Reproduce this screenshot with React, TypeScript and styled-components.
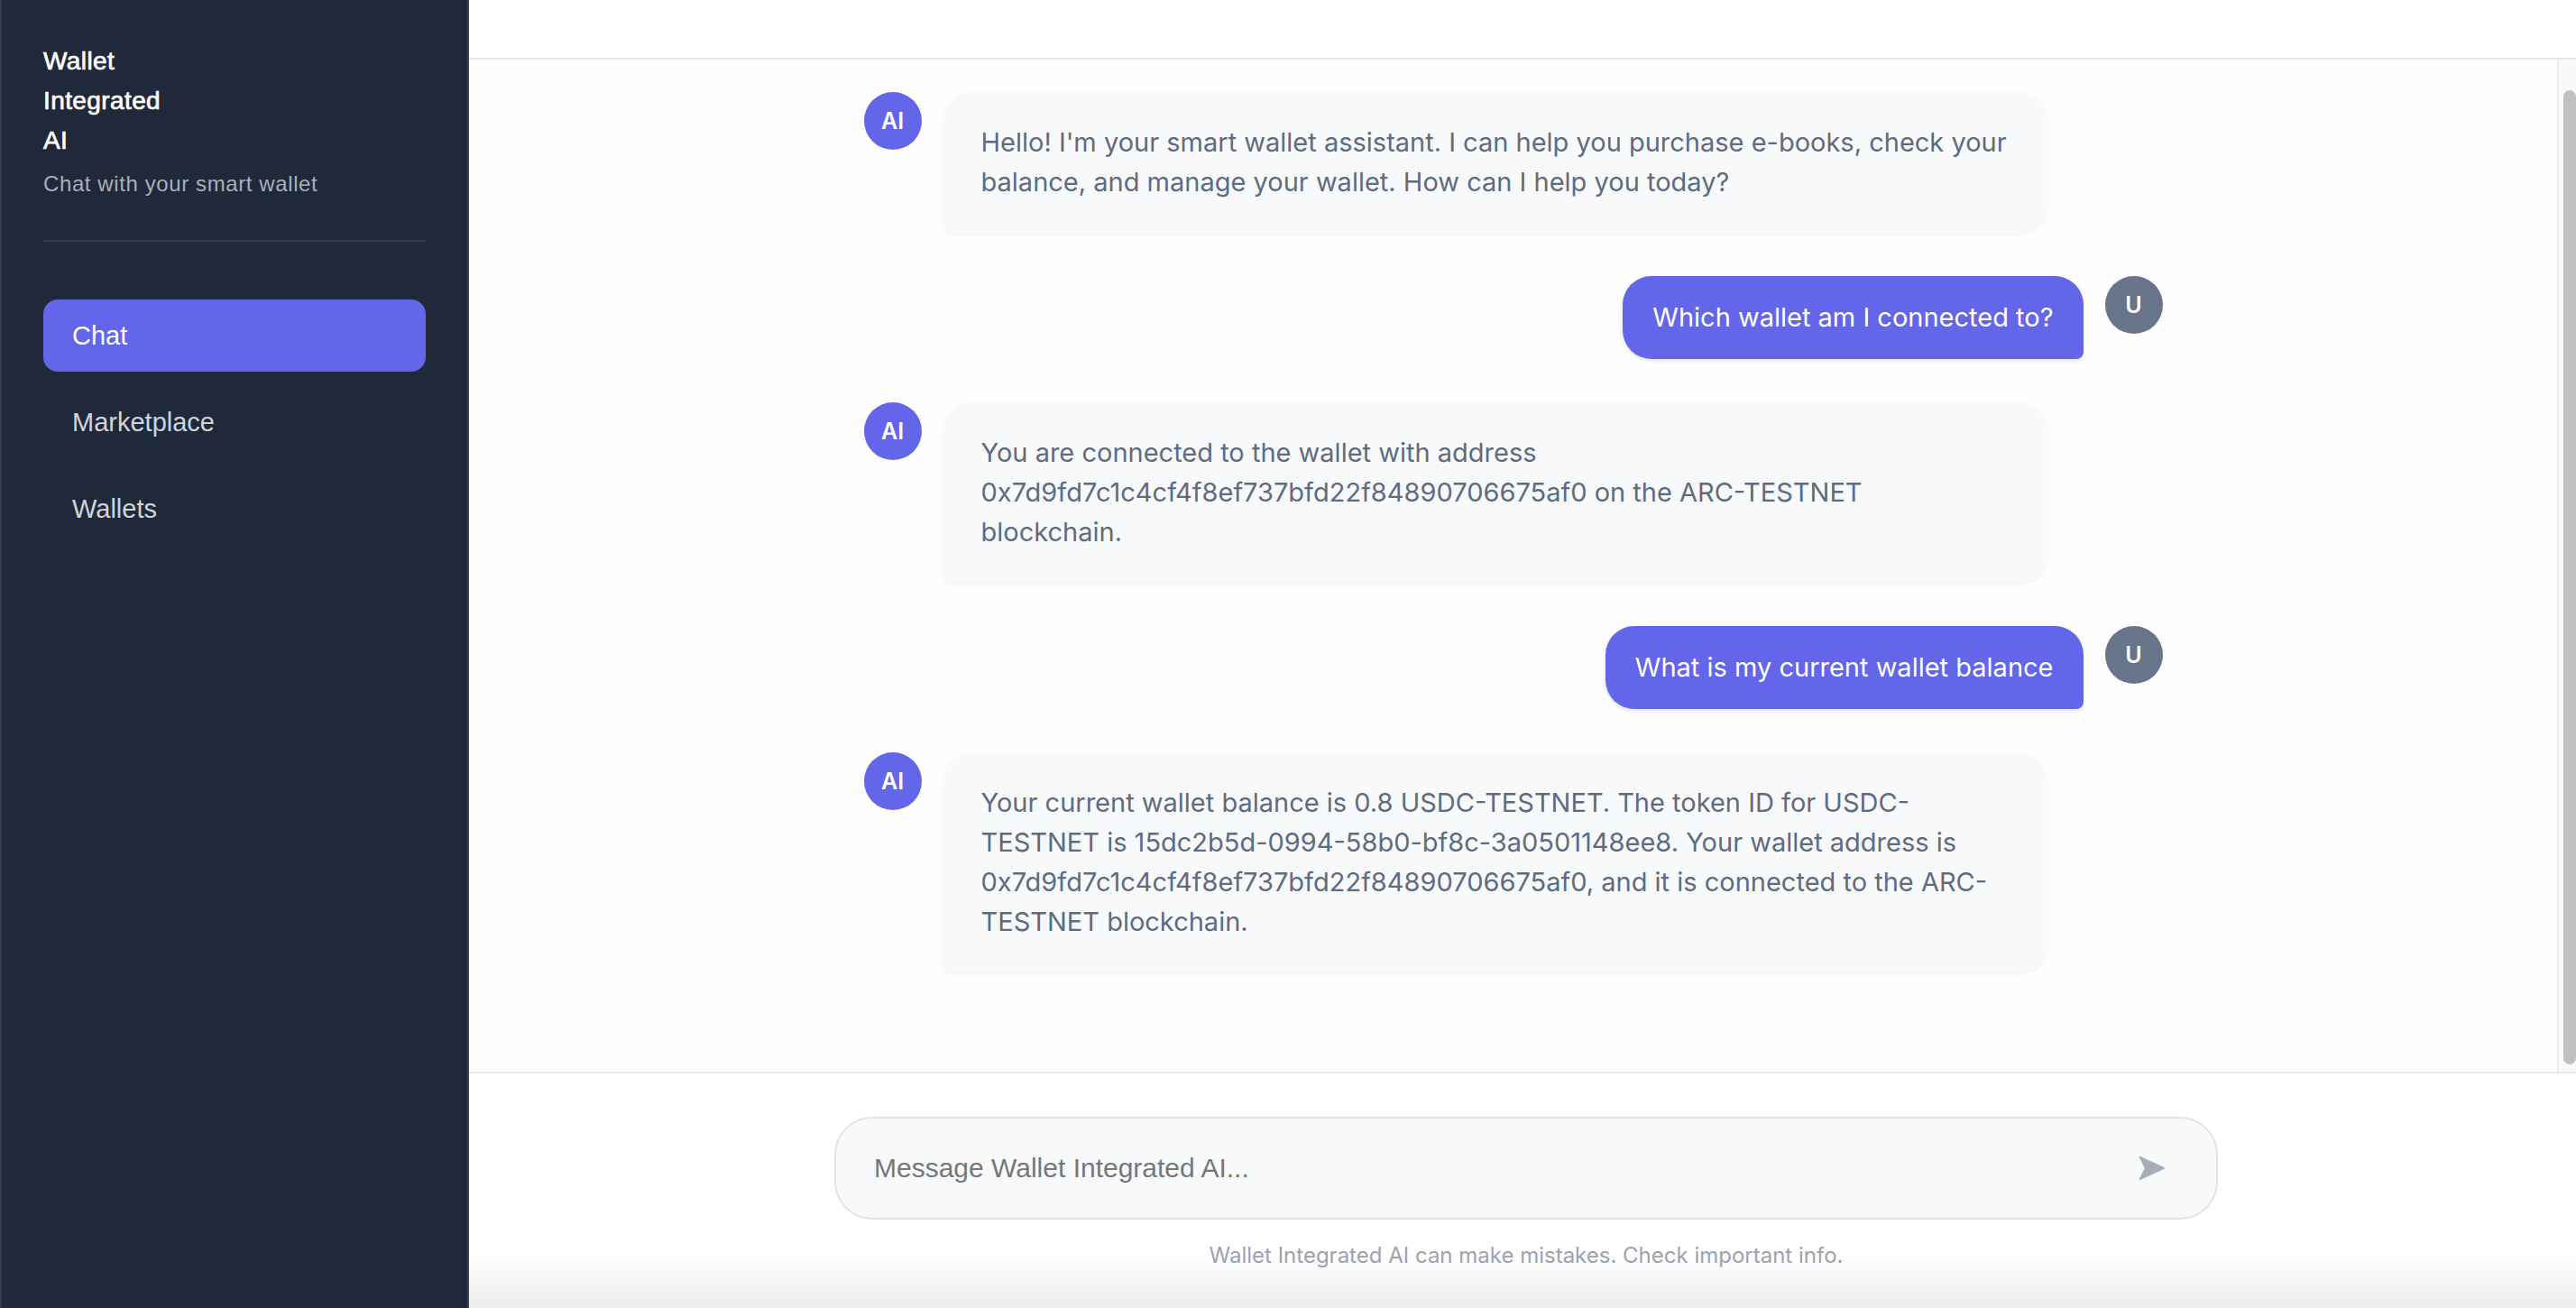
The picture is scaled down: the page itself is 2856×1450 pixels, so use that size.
import React, { useLayoutEffect, useRef } from 'react';
import styled, { createGlobalStyle } from 'styled-components';

const GlobalStyle = createGlobalStyle`
  html, body, #root {
    margin: 0;
    padding: 0;
    height: 100%;
  }
  body {
    overflow: hidden;
    background: #ffffff;
    font-family: 'Liberation Sans', Arial, sans-serif;
  }
  * {
    box-sizing: border-box;
  }
`;

type Message = {
  id: number;
  role: 'ai' | 'user';
  text: string;
};

const messages: Message[] = [
  {
    id: 1,
    role: 'ai',
    text: "Hello! I'm your smart wallet assistant. I can help you purchase e-books, check your balance, and manage your wallet. How can I help you today?",
  },
  { id: 2, role: 'user', text: 'Which wallet am I connected to?' },
  {
    id: 3,
    role: 'ai',
    text: 'You are connected to the wallet with address 0x7d9fd7c1c4cf4f8ef737bfd22f84890706675af0 on the ARC-TESTNET blockchain.',
  },
  { id: 4, role: 'user', text: 'What is my current wallet balance' },
  {
    id: 5,
    role: 'ai',
    text: 'Your current wallet balance is 0.8 USDC-TESTNET. The token ID for USDC-TESTNET is 15dc2b5d-0994-58b0-bf8c-3a0501148ee8. Your wallet address is 0x7d9fd7c1c4cf4f8ef737bfd22f84890706675af0, and it is connected to the ARC-TESTNET blockchain.',
  },
];

const navItems = ['Chat', 'Marketplace', 'Wallets'];

const Layout = styled.div`
  display: flex;
  height: 100vh;
  width: 100%;
`;

// Sidebar
const Sidebar = styled.aside`
  width: 520px;
  flex-shrink: 0;
  background: #20293a;
  border-left: 2px solid #333c4d;
  border-right: 2px solid #394252;
  padding: 46px 46px 48px 46px;
  display: flex;
  flex-direction: column;
`;

const Brand = styled.div`
  padding-bottom: 44px;
  border-bottom: 2px solid #333d4f;
`;

const BrandTitle = styled.h1`
  width: min-content;
  margin: 0;
  color: #ffffff;
  font-size: 28px;
  line-height: 44px;
  font-weight: 400;
  letter-spacing: 0.4px;
  -webkit-text-stroke: 0.7px #ffffff;
`;

const BrandSubtitle = styled.p`
  margin: 8px 0 0 0;
  color: #a8afbb;
  font-size: 24px;
  line-height: 36px;
  letter-spacing: 0.6px;
`;

const Nav = styled.nav`
  margin-top: 64px;
  display: flex;
  flex-direction: column;
  gap: 16px;
`;

const NavItem = styled.button<{ $active?: boolean }>`
  height: 80px;
  display: flex;
  align-items: center;
  padding: 0 32px;
  border: none;
  border-radius: 16px;
  background: ${(p) => (p.$active ? '#6466e9' : 'transparent')};
  color: ${(p) => (p.$active ? '#ffffff' : '#d1d5db')};
  font-family: 'Liberation Sans', Arial, sans-serif;
  font-size: 29px;
  text-align: left;
  cursor: pointer;
`;

// Main chat area
const Main = styled.main`
  flex: 1;
  min-width: 0;
  display: flex;
  flex-direction: column;
  background: #ffffff;
`;

const TopBar = styled.header`
  height: 66px;
  flex-shrink: 0;
  border-bottom: 2px solid #e5e7eb;
`;

const MessagesArea = styled.div`
  flex: 1;
  min-height: 0;
  display: flex;
`;

const MessageScroller = styled.div`
  flex: 1;
  min-width: 0;
  overflow-y: auto;
  scrollbar-width: none;
  padding: 80px 0 110px 0;
  background: #fefefe;

  &::-webkit-scrollbar {
    display: none;
  }
`;

const ScrollRail = styled.div`
  width: 21px;
  flex-shrink: 0;
  display: flex;
  padding: 34px 0 8px 5px;
  background: #f9f9f9;
  border-left: 2px solid #ebebeb;
`;

const ScrollThumb = styled.div`
  flex: 1;
  background: #c1c1c1;
  border-radius: 7px;
`;

const MessageColumn = styled.div`
  max-width: 1440px;
  margin: 0 auto;
  display: flex;
  flex-direction: column;
  gap: 48px;
`;

const Row = styled.div<{ $user?: boolean }>`
  display: flex;
  flex-direction: ${(p) => (p.$user ? 'row-reverse' : 'row')};
  align-items: flex-start;
  gap: 24px;
`;

const Avatar = styled.div<{ $user?: boolean }>`
  width: 64px;
  height: 64px;
  border-radius: 50%;
  flex-shrink: 0;
  display: flex;
  align-items: center;
  justify-content: center;
  background: ${(p) => (p.$user ? '#67748a' : '#6466e9')};
  color: #ffffff;
  font-family: Inter, 'Liberation Sans', sans-serif;
  font-size: 25px;
  font-weight: 600;
`;

const Bubble = styled.div<{ $user?: boolean }>`
  max-width: 85%;
  padding: ${(p) => (p.$user ? '24px 33px' : '34px 44px 34px 42px')};
  border-radius: ${(p) => (p.$user ? '32px 32px 8px 32px' : '32px 32px 32px 8px')};
  background: ${(p) => (p.$user ? '#6466e9' : '#f8f9fb')};
  color: ${(p) => (p.$user ? '#ffffff' : '#5f6b80')};
  box-shadow: ${(p) =>
    p.$user ? '0 2px 4px rgba(99, 102, 241, 0.18)' : '0 2px 4px rgba(15, 23, 42, 0.05)'};
  font-family: Inter, 'Liberation Sans', sans-serif;
  font-size: 29px;
  line-height: 44px;
  overflow-wrap: break-word;
`;

// Composer
const Composer = styled.footer`
  flex-shrink: 0;
  border-top: 2px solid #e5e7eb;
  padding: 48px 0 40px 8px;
  background: linear-gradient(to bottom, #ffffff 0%, #ffffff 76%, #ededed 100%);
`;

const InputBox = styled.div`
  max-width: 1534px;
  margin: 0 auto;
  height: 114px;
  display: flex;
  align-items: center;
  padding: 0 48px 0 40px;
  border: 2px solid #e3e4e6;
  border-radius: 42px;
  background: #f8f9fa;
`;

const TextInput = styled.input`
  flex: 1;
  border: none;
  outline: none;
  background: transparent;
  font-family: 'Liberation Sans', Arial, sans-serif;
  font-size: 30px;
  color: #374151;

  &::placeholder {
    color: #777777;
  }
`;

const SendButton = styled.button`
  width: 48px;
  height: 48px;
  padding: 0;
  border: none;
  background: transparent;
  display: flex;
  align-items: center;
  justify-content: center;
  cursor: pointer;
`;

const Disclaimer = styled.p`
  margin: 22px 0 0 0;
  text-align: center;
  color: #9ca3af;
  font-family: Inter, 'Liberation Sans', sans-serif;
  font-size: 24px;
  line-height: 36px;
`;

function SendIcon() {
  return (
    <svg width="31" height="30" viewBox="0 0 30 30" fill="#a6adb8">
      <path
        d="M2.4 2.2 L28.6 14.2 Q30 15 28.6 15.8 L2.4 27.8 Q0.8 28.4 1.6 26.8 L7.6 15 L1.6 3.2 Q0.8 1.6 2.4 2.2 Z"
        stroke="#a6adb8"
        strokeWidth="0.6"
        strokeLinejoin="round"
      />
    </svg>
  );
}

export default function App() {
  const scrollRef = useRef<HTMLDivElement>(null);

  // keep the conversation pinned to the latest message
  useLayoutEffect(() => {
    const el = scrollRef.current;
    if (el) el.scrollTop = el.scrollHeight;
  }, []);

  return (
    <>
      <GlobalStyle />
      <Layout>
        <Sidebar>
          <Brand>
            <BrandTitle>Wallet Integrated AI</BrandTitle>
            <BrandSubtitle>Chat with your smart wallet</BrandSubtitle>
          </Brand>
          <Nav>
            {navItems.map((item) => (
              <NavItem key={item} $active={item === 'Chat'}>
                {item}
              </NavItem>
            ))}
          </Nav>
        </Sidebar>

        <Main>
          <TopBar />
          <MessagesArea>
            <MessageScroller ref={scrollRef}>
              <MessageColumn>
                {messages.map((m) => (
                  <Row key={m.id} $user={m.role === 'user'}>
                    <Avatar $user={m.role === 'user'}>{m.role === 'user' ? 'U' : 'AI'}</Avatar>
                    <Bubble $user={m.role === 'user'}>{m.text}</Bubble>
                  </Row>
                ))}
              </MessageColumn>
            </MessageScroller>
            <ScrollRail>
              <ScrollThumb />
            </ScrollRail>
          </MessagesArea>
          <Composer>
            <InputBox>
              <TextInput placeholder="Message Wallet Integrated AI..." />
              <SendButton aria-label="Send">
                <SendIcon />
              </SendButton>
            </InputBox>
            <Disclaimer>Wallet Integrated AI can make mistakes. Check important info.</Disclaimer>
          </Composer>
        </Main>
      </Layout>
    </>
  );
}
